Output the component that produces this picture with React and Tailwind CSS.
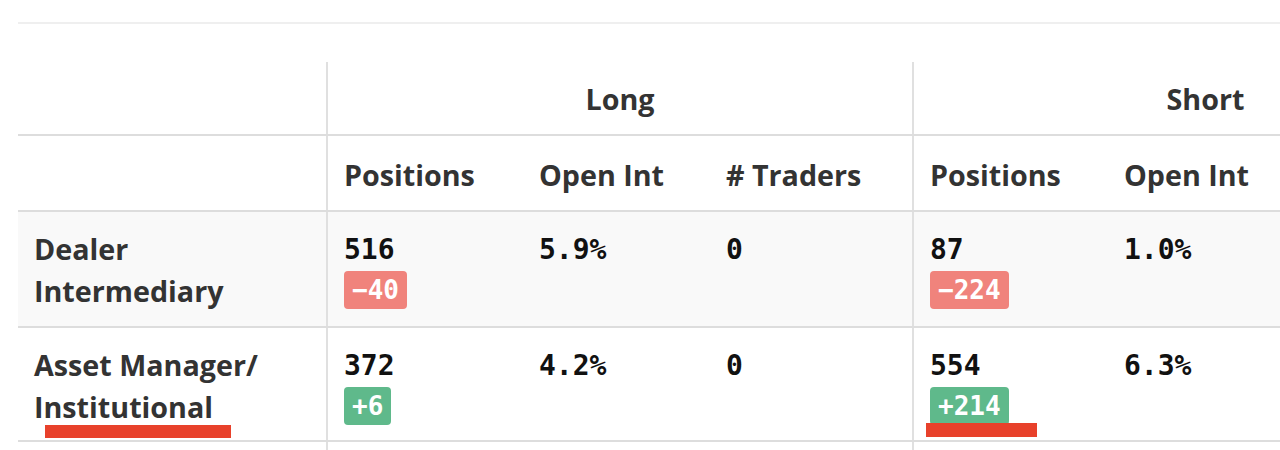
import React from "react";

const sans = { fontFamily: '"Open Sans", "Noto Sans", sans-serif' };

function Badge({ value, positive }) {
  return (
    <span
      className={`inline-block rounded-[4px] px-[8px] text-[26px] leading-[38px] font-bold text-white ${
        positive ? "bg-[#5fb98b]" : "bg-[#f0837c]"
      }`}
      style={{ fontFamily: '"DejaVu Sans Mono", monospace' }}
    >
      {value}
    </span>
  );
}

function NumCell({ value, change, positive, left }) {
  return (
    <div
      className={`pl-[16px] pt-[18px] ${left ? "border-l-2 border-[#e0e0e0]" : ""}`}
    >
      <div
        className="text-[28px] leading-[40px] font-bold text-[#111]"
        style={{ fontFamily: '"DejaVu Sans Mono", monospace' }}
      >
        {value}
      </div>
      {change ? (
        <div className="mt-[1px]">
          <Badge value={change} positive={positive} />
        </div>
      ) : null}
    </div>
  );
}

const rows = [
  {
    label: ["Dealer", "Intermediary"],
    bg: "bg-[#f9f9f9]",
    h: "h-[116px]",
    cells: [
      ["516", "−40", false],
      ["5.9%"],
      ["0"],
      ["87", "−224", false],
      ["1.0%"],
      ["0"],
    ],
  },
  {
    label: ["Asset Manager/", "Institutional"],
    bg: "bg-white",
    h: "h-[114px]",
    cells: [
      ["372", "+6", true],
      ["4.2%"],
      ["0"],
      ["554", "+214", true],
      ["6.3%"],
      ["0"],
    ],
  },
];

const cols = "grid grid-cols-[308px_197px_187px_202px_196px_187px_202px]";

export default function App() {
  return (
    <div className="relative w-[1280px] h-[450px] overflow-hidden bg-white" style={sans}>
      <div className="pl-[18px] pt-[22px]">
        <div className="border-t-2 border-[#efefef]" />
        <div className="mt-[38px] w-[1479px] text-[#333]">
          {/* Header row 1 */}
          <div className={`${cols} h-[74px] border-b-2 border-[#dddddd]`}>
            <div />
            <div className="col-span-3 flex items-center justify-center pt-[2px] border-l-2 border-[#e0e0e0] text-[28.7px] font-bold">
              Long
            </div>
            <div className="col-span-3 flex items-center justify-center pt-[2px] border-l-2 border-[#e0e0e0] text-[28.7px] font-bold">
              Short
            </div>
          </div>
          {/* Header row 2 */}
          <div className={`${cols} h-[76px] border-b-2 border-[#dddddd] text-[28.7px] font-bold`}>
            <div />
            <div className="flex items-center pl-[16px] pt-[4px] border-l-2 border-[#e0e0e0]">Positions</div>
            <div className="flex items-center pl-[16px] pt-[4px]">Open Int</div>
            <div className="flex items-center pl-[16px] pt-[4px]"># Traders</div>
            <div className="flex items-center pl-[16px] pt-[4px] border-l-2 border-[#e0e0e0]">Positions</div>
            <div className="flex items-center pl-[16px] pt-[4px]">Open Int</div>
            <div className="flex items-center pl-[16px] pt-[4px]"># Traders</div>
          </div>
          {rows.map((r, i) => (
            <div key={i} className={`${cols} ${r.h} ${r.bg} border-b-2 border-[#dddddd]`}>
              <div className="pl-[16px] pt-[16px] text-[28.7px] leading-[42px] font-bold text-[#333]">
                <div>{r.label[0]}</div>
                <div>{r.label[1]}</div>
              </div>
              {r.cells.map((c, j) => (
                <NumCell
                  key={j}
                  value={c[0]}
                  change={c[1]}
                  positive={c[2]}
                  left={j === 0 || j === 3}
                />
              ))}
            </div>
          ))}
          <div className={`${cols} h-[40px]`}>
            <div />
            <div className="border-l-2 border-[#e0e0e0]" />
            <div />
            <div />
            <div className="border-l-2 border-[#e0e0e0]" />
          </div>
        </div>
      </div>
      {/* annotation underlines */}
      <div className="absolute left-[45px] top-[425px] w-[186px] h-[13px] bg-[#e8412b]" />
      <div className="absolute left-[926px] top-[423px] w-[111px] h-[14px] bg-[#e8412b]" />
    </div>
  );
}
